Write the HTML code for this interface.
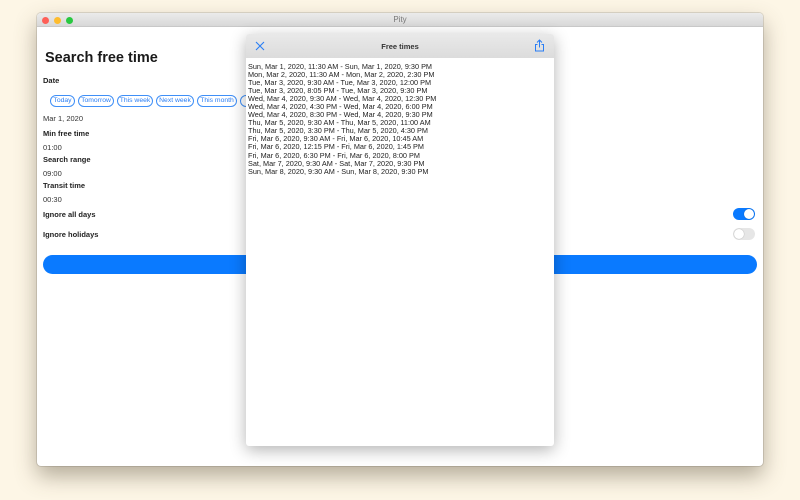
<!DOCTYPE html>
<html><head><meta charset="utf-8"><style>
body{margin:0;width:800px;height:500px;background:#fdf6e6;font-family:"Liberation Sans",sans-serif;position:relative;overflow:hidden}
.win{position:absolute;left:37px;top:13px;width:726px;height:453px;background:#fff;border-radius:4px;box-shadow:0 10px 22px rgba(90,80,60,.45),0 0 0 1px rgba(0,0,0,.12);overflow:hidden}
.tb{height:13px;background:linear-gradient(#ebebeb,#d8d8d8);border-bottom:1px solid #c8c8c8;text-align:center;font-size:8px;color:#777;line-height:13px}
.dot{position:absolute;top:3.5px;width:7px;height:7px;border-radius:50%}
.a{position:absolute;color:#222}
h1{position:absolute;left:8px;top:37px;margin:0;font-size:14.5px;font-weight:bold;color:#1a1a1a}
.lb{font-size:7.5px;font-weight:bold}
.v{font-size:7.5px;color:#333}
.chip{position:absolute;top:82px;height:10px;border:1px solid #3f8ff7;border-radius:6px;font-size:6.8px;color:#2a7ef5;line-height:9px;text-align:center;white-space:nowrap;overflow:hidden}
.tg{position:absolute;width:22px;height:12px;border-radius:6px}
.tg i{position:absolute;top:1px;width:10px;height:10px;border-radius:50%;background:#fff;box-shadow:0 0 1px rgba(0,0,0,.4)}
.btn{position:absolute;left:6px;top:242px;width:714px;height:19px;border-radius:10px;background:#0a7aff}
.sheet{position:absolute;left:246px;top:34px;width:308px;height:412px;background:#fff;border-radius:3px;box-shadow:0 4px 16px rgba(0,0,0,.3)}
.sh{height:24px;background:linear-gradient(#e9e9e9,#dcdcdc);border-radius:3px 3px 0 0;text-align:center;line-height:25px;font-size:7.5px;font-weight:bold;color:#333}
.list{position:absolute;left:2px;top:29px;font-size:7.3px;line-height:8.05px;color:#222;white-space:pre}
</style></head><body>
<div class="win">
<div class="tb">Pity</div>
<div class="dot" style="left:5px;background:#fe5f57"></div>
<div class="dot" style="left:17px;background:#febc2e"></div>
<div class="dot" style="left:29px;background:#28c840"></div>
<h1>Search free time</h1>
<div class="a lb" style="left:6px;top:63px">Date</div>
<div class="chip" style="left:13px;width:23px">Today</div>
<div class="chip" style="left:41px;width:34px">Tomorrow</div>
<div class="chip" style="left:80px;width:34px">This week</div>
<div class="chip" style="left:119px;width:36px">Next week</div>
<div class="chip" style="left:160px;width:38px">This month</div>
<div class="chip" style="left:203px;width:40px">Next year</div>
<div class="a v" style="left:6px;top:101px">Mar 1, 2020</div>
<div class="a lb" style="left:6px;top:116px">Min free time</div>
<div class="a v" style="left:6px;top:130px">01:00</div>
<div class="a lb" style="left:6px;top:142px">Search range</div>
<div class="a v" style="left:6px;top:156px">09:00</div>
<div class="a lb" style="left:6px;top:168px">Transit time</div>
<div class="a v" style="left:6px;top:182px">00:30</div>
<div class="a lb" style="left:6px;top:197px">Ignore all days</div>
<div class="a lb" style="left:6px;top:217px">Ignore holidays</div>
<div class="tg" style="left:696px;top:195px;background:#0a7aff"><i style="left:11px"></i></div>
<div class="tg" style="left:696px;top:215px;background:#e6e6e6"><i style="left:1px"></i></div>
<div class="btn"></div>
</div>
<div class="sheet">
<div class="sh">Free times</div>
<svg style="position:absolute;left:9px;top:7px" width="10" height="10" viewBox="0 0 10 10"><path d="M1 1L9 9M9 1L1 9" stroke="#2a7ef5" stroke-width="1.1"/></svg>
<svg style="position:absolute;left:288px;top:5px" width="11" height="13" viewBox="0 0 11 13"><path d="M5.5 1V8.5M3 3.5L5.5 1L8 3.5M3.5 5.5H1.5V12H9.5V5.5H7.5" stroke="#2a7ef5" stroke-width="1" fill="none"/></svg>
<div class="list">Sun, Mar 1, 2020, 11:30 AM - Sun, Mar 1, 2020, 9:30 PM
Mon, Mar 2, 2020, 11:30 AM - Mon, Mar 2, 2020, 2:30 PM
Tue, Mar 3, 2020, 9:30 AM - Tue, Mar 3, 2020, 12:00 PM
Tue, Mar 3, 2020, 8:05 PM - Tue, Mar 3, 2020, 9:30 PM
Wed, Mar 4, 2020, 9:30 AM - Wed, Mar 4, 2020, 12:30 PM
Wed, Mar 4, 2020, 4:30 PM - Wed, Mar 4, 2020, 6:00 PM
Wed, Mar 4, 2020, 8:30 PM - Wed, Mar 4, 2020, 9:30 PM
Thu, Mar 5, 2020, 9:30 AM - Thu, Mar 5, 2020, 11:00 AM
Thu, Mar 5, 2020, 3:30 PM - Thu, Mar 5, 2020, 4:30 PM
Fri, Mar 6, 2020, 9:30 AM - Fri, Mar 6, 2020, 10:45 AM
Fri, Mar 6, 2020, 12:15 PM - Fri, Mar 6, 2020, 1:45 PM
Fri, Mar 6, 2020, 6:30 PM - Fri, Mar 6, 2020, 8:00 PM
Sat, Mar 7, 2020, 9:30 AM - Sat, Mar 7, 2020, 9:30 PM
Sun, Mar 8, 2020, 9:30 AM - Sun, Mar 8, 2020, 9:30 PM</div>
</div>
</body></html>
